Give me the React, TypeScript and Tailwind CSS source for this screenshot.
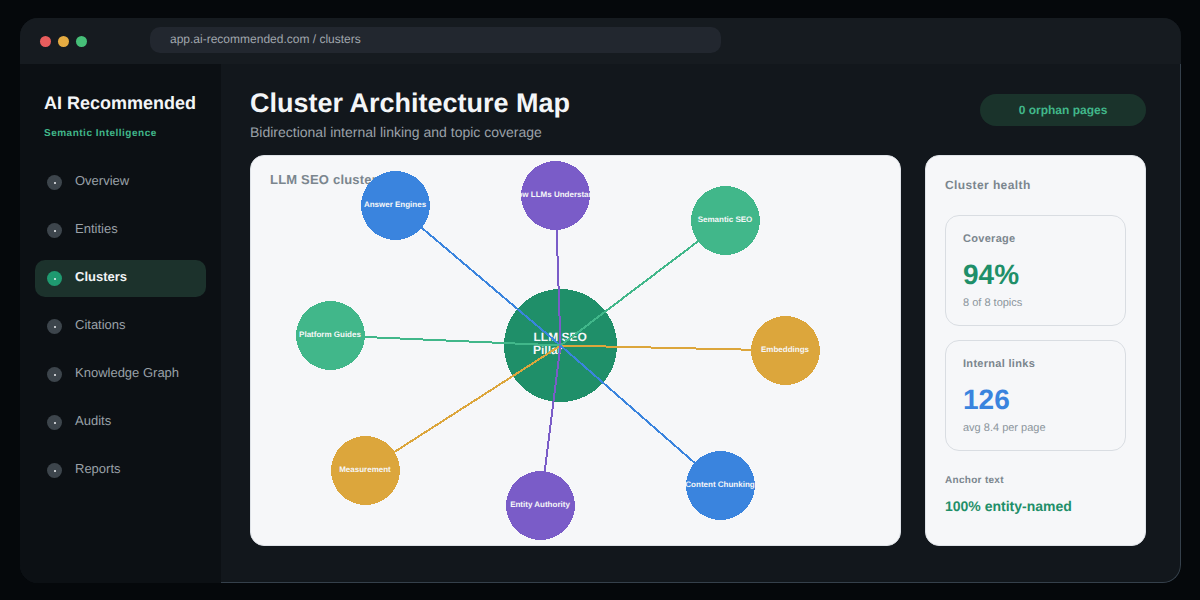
const NAV = ['Overview', 'Entities', 'Clusters', 'Citations', 'Knowledge Graph', 'Audits', 'Reports']

const CENTER = { x: 310.5, y: 190.5 }

// positions are relative to the map card
const NODES = [
  { label: 'Answer Engines', x: 145.5, y: 50.5, color: '#3a84de' },
  { label: 'How LLMs Understand', x: 305.5, y: 40.5, color: '#7a5cc8' },
  { label: 'Semantic SEO', x: 475.5, y: 65.5, color: '#41b78a' },
  { label: 'Platform Guides', x: 80.5, y: 180.5, color: '#41b78a' },
  { label: 'Embeddings', x: 535.5, y: 195.5, color: '#dca63c' },
  { label: 'Measurement', x: 115.5, y: 315.5, color: '#dca63c' },
  { label: 'Entity Authority', x: 290.5, y: 350.5, color: '#7a5cc8' },
  { label: 'Content Chunking', x: 470.5, y: 330.5, color: '#3a84de' },
]

function StatBox({ label, value, note, valueClass }: { label: string; value: string; note: string; valueClass: string }) {
  return (
    <div className="h-[111px] rounded-[14px] border border-[#d9dde2] px-[17px] pt-[16px]">
      <div className="text-[11px] leading-[14px] font-bold tracking-[0.3px] text-[#7b868e]">{label}</div>
      <div className={`mt-[13px] text-[28px] leading-[32px] font-bold ${valueClass}`}>{value}</div>
      <div className="mt-[5px] text-[11px] leading-[14px] text-[#8b959c]">{note}</div>
    </div>
  )
}

export default function App() {
  return (
    <div className="h-[600px] w-[1200px] overflow-hidden bg-[#05080b] pt-[18px] pl-5 font-['Liberation_Sans',Arial,sans-serif] [text-rendering:geometricPrecision]">
      <div className="flex h-[565px] w-[1161px] flex-col overflow-hidden rounded-[18px] bg-[#12171c]">

        {/* Title bar */}
        <div className="flex h-[46px] shrink-0 items-center bg-[#161b20] pl-5">
          <div className="flex gap-[7px]">
            <span className="size-[11px] rounded-full bg-[#e85d5d]" />
            <span className="size-[11px] rounded-full bg-[#e5ac42]" />
            <span className="size-[11px] rounded-full bg-[#46bf78]" />
          </div>
          <div className="mt-[-3px] ml-[63px] flex h-[26px] w-[571px] items-center rounded-[10px] bg-[#22272f] pb-[2px] pl-5 text-xs text-[#a0a6ad]">
            app.ai-recommended.com / clusters
          </div>
        </div>

        <div className="flex min-h-0 flex-1">
          {/* Sidebar */}
          <aside className="w-[201px] shrink-0 bg-[#0c1014] pt-[27px] pl-[15px]">
            <div className="pl-[9px] text-[18px] leading-[24px] font-bold text-[#f3f5f7]">AI Recommended</div>
            <div className="mt-[12px] pl-[9px] text-[10px] leading-[14px] font-bold tracking-[0.5px] text-[#41b78a]">Semantic Intelligence</div>
            <nav className="mt-[23px] flex flex-col gap-[11px]">
              {NAV.map((item) => {
                const active = item === 'Clusters'
                return (
                  <div key={item} className={`flex h-[37px] w-[171px] items-center gap-[13px] rounded-[10px] pl-3 ${active ? 'bg-[#1c322c]' : ''}`}>
                    <span className={`flex size-[15px] items-center justify-center rounded-full ${active ? 'bg-[#1f9a70]' : 'bg-[#3d454c]'}`}>
                      <span className="size-[2px] rounded-full bg-[#f0f2f4]" />
                    </span>
                    <span className={`pb-[4px] text-[13px] ${active ? 'font-bold text-[#f1f3f5]' : 'text-[#9aa1a8]'}`}>{item}</span>
                  </div>
                )
              })}
            </nav>
          </aside>

          {/* Main */}
          <main className="flex min-w-0 flex-1 flex-col rounded-br-[18px] border-r border-b border-[#35404b] pt-[21px] pr-[34px] pl-[29px]">
            <div className="flex h-[70px] shrink-0 items-start justify-between">
              <div>
                <h1 className="pt-[1px] text-[27px] leading-[34px] font-bold text-[#f3f5f7]">Cluster Architecture Map</h1>
                <p className="mt-[3px] text-sm leading-[18px] text-[#9aa1a8]">Bidirectional internal linking and topic coverage</p>
              </div>
              <div className="mt-[9px] flex h-[32px] w-[166px] items-center justify-center rounded-full bg-[#1a332b] text-xs font-bold text-[#41b78a]">
                0 orphan pages
              </div>
            </div>

            <div className="flex gap-6">
              {/* Map */}
              <div className="relative h-[391px] w-[651px] shrink-0 overflow-hidden rounded-[14px] border border-[#dfe3e8] bg-[#f6f7f9]">
                <div className="pt-[16px] pl-[19px] text-[13px] leading-[16px] font-bold tracking-[0.2px] text-[#7b868e]">LLM SEO cluster</div>

                <svg className="absolute -top-px -left-px font-bold" width="651" height="391" shapeRendering="crispEdges">
                  <circle cx={CENTER.x} cy={CENTER.y} r="56.5" fill="#1f8f69" />
                  <text x="283.5" y="186" fontSize="12" fill="#f6f7f9">LLM SEO</text>
                  <text x="283" y="199" fontSize="12" fill="#f6f7f9">Pillar</text>
                  {NODES.map((n) => (
                    <line key={n.label} x1={CENTER.x} y1={CENTER.y} x2={n.x} y2={n.y} stroke={n.color} strokeWidth="2" />
                  ))}
                  {NODES.map((n) => (
                    <g key={n.label}>
                      <circle cx={n.x} cy={n.y} r="34.5" fill={n.color} />
                      <text x={n.x - 0.5} y={n.y + 1.5} fontSize="8" textAnchor="middle" fill="#f6f7f9">{n.label}</text>
                    </g>
                  ))}
                </svg>
              </div>

              {/* Cluster health */}
              <div className="h-[391px] w-[221px] shrink-0 rounded-[14px] border border-[#dfe3e8] bg-[#f6f7f9] px-[19px] pt-[22px]">
                <div className="text-xs leading-[15px] font-bold tracking-[0.4px] text-[#7b868e]">Cluster health</div>
                <div className="mt-[22px] flex flex-col gap-[14px]">
                  <StatBox label="Coverage" value="94%" note="8 of 8 topics" valueClass="text-[#1f8f69]" />
                  <StatBox label="Internal links" value="126" note="avg 8.4 per page" valueClass="text-[#3a84de]" />
                </div>
                <div className="mt-[23px] text-[10px] leading-[13px] font-bold tracking-[0.3px] text-[#7b868e]">Anchor text</div>
                <div className="mt-[10px] text-sm leading-[18px] font-bold text-[#1f8f69]">100% entity-named</div>
              </div>
            </div>
          </main>
        </div>
      </div>
    </div>
  )
}
